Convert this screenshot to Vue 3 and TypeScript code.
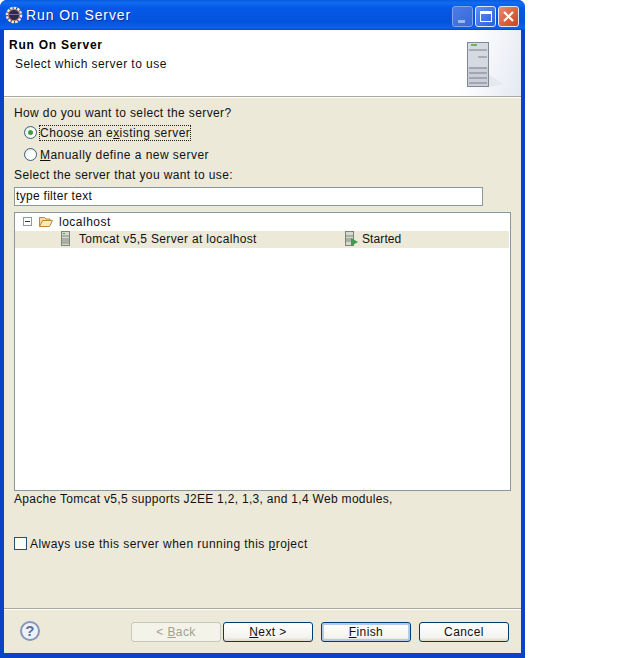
<template>
  <div class="window">
    <div class="titlebar">
      <svg class="app-icon" width="18" height="18" viewBox="0 0 18 18">
        <circle cx="9" cy="9" r="7" fill="#2b2a55" stroke="#efe6da" stroke-width="2.6" stroke-dasharray="2.6 1" />
        <circle cx="9" cy="9" r="5.6" fill="none" stroke="#d0805a" stroke-width="1" />
        <path d="M3.5 8.5h11" stroke="#77709f" stroke-width="1" />
      </svg>
      <span class="title">Run On Server</span>
      <div class="win-buttons">
        <div class="win-btn minimize"><span class="min-bar"></span></div>
        <div class="win-btn"><span class="max-box"></span></div>
        <div class="win-btn close">
          <svg width="13" height="13" viewBox="0 0 13 13">
            <path d="M2 2l9 9M11 2l-9 9" stroke="#fff" stroke-width="2.2" />
          </svg>
        </div>
      </div>
    </div>

    <div class="client">
      <header class="banner">
        <div class="banner-text">
          <h1>Run On Server</h1>
          <p>Select which server to use</p>
        </div>
        <svg class="banner-icon" width="40" height="48" viewBox="0 0 40 48">
          <path d="M23 46l15-3-15-9z" fill="#e6e8ee" />
          <rect x="1.5" y="1.5" width="21" height="44" fill="#c9ced8" stroke="#7f8790" />
          <rect x="2" y="2" width="20" height="24" fill="#d5d9e1" />
          <rect x="5" y="3" width="6" height="2" fill="#6fb35d" />
          <path d="M3 9h18M12 16h9M3 27h18M3 32h18M3 37h18M3 42h18" stroke="#78808a" />
        </svg>
      </header>

      <main class="body">
        <div class="label first">How do you want to select the server?</div>
        <div class="radio-group">
          <label class="radio-row">
            <span class="radio checked"></span>
            <span class="focused">Choose an e<u>x</u>isting server</span>
          </label>
          <label class="radio-row">
            <span class="radio"></span>
            <span class="plain"><u>M</u>anually define a new server</span>
          </label>
        </div>
        <div class="label">Select the server that you want to use:</div>
        <div class="filter">type filter text</div>

        <div class="tree">
          <div class="tree-row">
            <span class="expander"></span>
            <svg class="folder" width="16" height="13" viewBox="0 0 16 13">
              <path d="M1.5 11.5V2.5h5l1.5 1.5h4v2" fill="#f6dc9a" stroke="#c08a30" />
              <path d="M1.5 11.5l3-6h10l-3 6z" fill="#fbe9b8" stroke="#c08a30" />
            </svg>
            <span class="node-name">localhost</span>
          </div>
          <div class="tree-row selected">
            <svg class="server" width="9" height="15" viewBox="0 0 9 15">
              <rect x="0.5" y="0.5" width="8" height="14" fill="#d5d9d0" stroke="#7d8578" />
              <rect x="2" y="2" width="2" height="1" fill="#4e9d46" />
              <path d="M1 5h7M1 8h7M1 10h7M1 12h7" stroke="#7d8578" />
            </svg>
            <span class="server-name">Tomcat v5,5 Server at localhost</span>
            <svg class="state" width="14" height="15" viewBox="0 0 14 15">
              <rect x="0.5" y="0.5" width="8" height="14" fill="#d5d9d0" stroke="#7d8578" />
              <path d="M1 5h7M1 8h7M1 10h7" stroke="#7d8578" />
              <path d="M6 7l7 4-7 4z" fill="#3f9a55" />
            </svg>
            <span class="server-state">Started</span>
          </div>
        </div>

        <div class="description">Apache Tomcat v5,5 supports J2EE 1,2, 1,3, and 1,4 Web modules,</div>

        <label class="check-row">
          <span class="checkbox"></span>
          <span>Always use this server when running this <u>p</u>roject</span>
        </label>
      </main>

      <footer class="footer">
        <svg class="help" width="22" height="22" viewBox="0 0 22 22">
          <circle cx="11" cy="10" r="9" fill="#eef1f8" stroke="#8595bb" stroke-width="2" />
          <text x="11" y="15" text-anchor="middle" class="help-mark">?</text>
        </svg>
        <div class="buttons">
          <button class="btn" disabled>&lt; <u>B</u>ack</button>
          <button class="btn next"><u>N</u>ext &gt;</button>
          <button class="btn default"><u>F</u>inish</button>
          <button class="btn">Cancel</button>
        </div>
      </footer>
    </div>
  </div>
</template>

<script setup lang="ts">
</script>

<style>
html,
body {
  background: #fff;
}
</style>

<style scoped>
.window {
  width: 525px;
  height: 658px;
  box-sizing: border-box;
  display: flex;
  flex-direction: column;
  background: #0843c8;
  border-radius: 7px 7px 0 0;
  font-family: "Liberation Sans", Arial, sans-serif;
  font-size: 12px;
  letter-spacing: 0.4px;
  color: #111;
  overflow: hidden;
}

.titlebar {
  height: 30px;
  flex: none;
  display: flex;
  align-items: center;
  padding: 0 6px 0 5px;
  background: linear-gradient(#0a5be0 0, #0f6cf0 3px, #0558e6 8px, #0453de 22px, #0a62ec 28px, #0447c8 30px);
}

.app-icon {
  flex: none;
}

.title {
  margin-left: 3px;
  color: #fff;
  font-size: 14px;
  letter-spacing: 0.9px;
  text-shadow: 1px 1px 0 #0a2f9c;
}

.win-buttons {
  margin-left: auto;
  display: flex;
  gap: 2px;
  margin-top: 2px;
}

.win-btn {
  width: 19px;
  height: 19px;
  border: 1px solid #dfe8fa;
  border-radius: 3px;
  background: linear-gradient(135deg, #5f8ff0, #2a5fd8);
  display: flex;
  align-items: center;
  justify-content: center;
  position: relative;
}

.minimize {
  border-color: #7fa4ec;
  background: linear-gradient(135deg, #4a7de8, #3a68d8);
}

.min-bar {
  position: absolute;
  left: 5px;
  bottom: 3px;
  width: 7px;
  height: 3px;
  background: #9db8ef;
}

.max-box {
  width: 12px;
  height: 11px;
  box-sizing: border-box;
  border: 1px solid #fff;
  border-top-width: 3px;
}

.close {
  background: linear-gradient(135deg, #e88a6a, #c8441f);
}

.client {
  flex: 1;
  margin: 0 4px 5px;
  display: flex;
  flex-direction: column;
  background: #ece9d8;
  min-height: 0;
}

.banner {
  height: 67px;
  flex: none;
  box-sizing: border-box;
  display: flex;
  justify-content: space-between;
  padding: 8px 15px 0 5px;
  background: linear-gradient(105deg, #fff 88%, #e4e8f2 100%);
  border-bottom: 1px solid #aca899;
}

.banner h1 {
  margin: 0;
  font-size: 12px;
  line-height: 14px;
  font-weight: 700;
  letter-spacing: 0.75px;
  color: #000;
}

.banner p {
  margin: 5px 0 0 6px;
  line-height: 14px;
  letter-spacing: 0.45px;
}

.banner-icon {
  margin-top: 3px;
}

.body {
  flex: 1;
  display: flex;
  flex-direction: column;
  padding: 0 10px;
  min-height: 0;
  border-top: 1px solid #fff;
}

.label {
  line-height: 14px;
  letter-spacing: 0.38px;
}

.label.first {
  margin-top: 8px;
}

.radio-group {
  display: flex;
  flex-direction: column;
  gap: 7px;
  margin: 5px 0 6px 10px;
  letter-spacing: 0.46px;
}

.radio-row {
  display: flex;
  align-items: center;
  height: 15px;
}

.radio {
  width: 13px;
  height: 13px;
  flex: none;
  box-sizing: border-box;
  border: 1px solid #3a5f80;
  border-radius: 50%;
  background: radial-gradient(circle at 60% 60%, #fff 40%, #dcd9cc 100%);
  margin-right: 3px;
  display: flex;
  align-items: center;
  justify-content: center;
}

.radio.checked::after {
  content: "";
  width: 5px;
  height: 5px;
  border-radius: 50%;
  background: #3fa03f;
}

.focused {
  outline: 1px dotted #222;
  line-height: 14px;
}

.filter {
  margin-top: 5px;
  width: 469px;
  height: 19px;
  box-sizing: border-box;
  border: 1px solid #88989f;
  background: #fff;
  line-height: 17px;
  padding-left: 1px;
  letter-spacing: 0.3px;
}

.tree {
  margin-top: 6px;
  width: 497px;
  height: 279px;
  flex: none;
  box-sizing: border-box;
  border: 1px solid #88989f;
  background: #fff;
  padding-top: 1px;
}

.tree-row {
  height: 17px;
  display: flex;
  align-items: center;
  margin-right: 1px;
}

.expander {
  width: 9px;
  height: 9px;
  margin-left: 8px;
  margin-bottom: 2px;
  box-sizing: border-box;
  border: 1px solid #8a9aa5;
  position: relative;
  background: #fff;
}

.expander::after {
  content: "";
  position: absolute;
  left: 1px;
  top: 3px;
  width: 5px;
  height: 1px;
  background: #333;
}

.folder {
  margin-left: 6px;
  margin-bottom: 2px;
}

.node-name {
  margin-left: 5px;
  margin-bottom: 2px;
  letter-spacing: 0.5px;
}

.selected {
  background: #ece9d8;
}

.server {
  margin-left: 46px;
  margin-bottom: 2px;
}

.server-name {
  margin-left: 9px;
  margin-bottom: 2px;
  width: 266px;
  letter-spacing: 0.33px;
}

.state {
  margin-right: 3px;
  margin-bottom: 2px;
}

.server-state {
  margin-bottom: 2px;
  letter-spacing: 0.1px;
}

.description {
  margin-top: 1px;
  line-height: 14px;
  letter-spacing: 0.3px;
}

.check-row {
  margin-top: 30px;
  display: flex;
  align-items: center;
  height: 15px;
  letter-spacing: 0.45px;
}

.checkbox {
  width: 13px;
  height: 13px;
  flex: none;
  box-sizing: border-box;
  border: 1px solid #2a5070;
  background: #fbfbf8;
  margin-right: 3px;
}

.footer {
  height: 45px;
  flex: none;
  box-sizing: border-box;
  display: flex;
  align-items: center;
  justify-content: space-between;
  padding: 13px 12px 11px 15px;
  border-top: 1px solid #aca899;
  box-shadow: inset 0 1px 0 #fff;
}

.help-mark {
  font-family: "Liberation Sans", Arial, sans-serif;
  font-size: 15px;
  font-weight: 700;
  fill: #5a6f9a;
}

.buttons {
  display: flex;
  gap: 8px;
}

.btn {
  width: 90px;
  height: 20px;
  padding: 0;
  box-sizing: border-box;
  border: 1px solid #003c74;
  border-radius: 3px;
  background: linear-gradient(#fff, #f4f3ee 80%, #dcd8ca);
  font: inherit;
  letter-spacing: inherit;
  color: #111;
}

.btn:disabled {
  border-color: #c9c7ba;
  background: #f4f3ea;
  color: #a3a08f;
}

.next {
  margin-left: -6px;
}

.default {
  box-shadow: inset 0 0 0 2px #b5cbee;
}
</style>
